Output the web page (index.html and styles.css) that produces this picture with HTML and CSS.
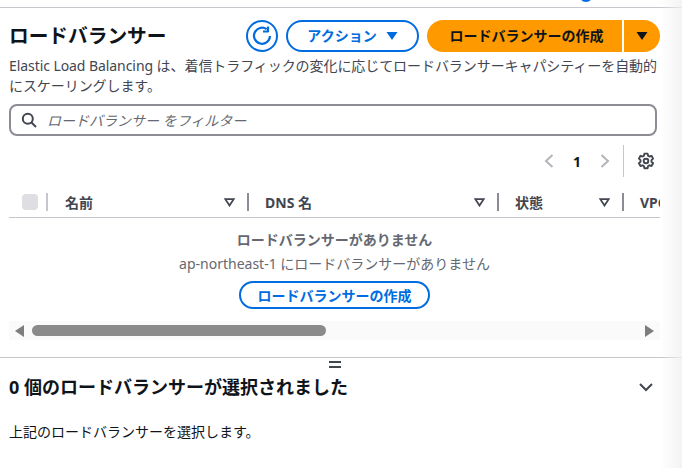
FILE: index.html
```html
<!DOCTYPE html>
<html lang="ja">
<head>
<meta charset="utf-8">
<title>ロードバランサー</title>
<link rel="stylesheet" href="styles.css">
</head>
<body>
<div class="topstrip"><span class="topdot"></span></div>
<main class="panel">
  <header class="head">
    <h1 class="title">ロードバランサー</h1>
    <div class="actions">
      <button class="iconbtn" aria-label="更新">
        <svg width="22" height="22" viewBox="0 0 22 22" fill="none" stroke="#006ce0" stroke-width="2.2"><path d="M15.6 4.2A8 8 0 1 0 19 11"/><path d="M17 1.5v5h-5" stroke-linejoin="round"/></svg>
      </button>
      <button class="btn normal"><span class="label">アクション</span><svg class="caret" width="12" height="10" viewBox="0 0 12 10"><path d="M0.5 1h11L6 9z" fill="#006ce0"/></svg></button>
      <div class="split">
        <button class="btn primary"><span class="label">ロードバランサーの作成</span></button>
        <button class="btn primary more" aria-label="その他"><svg width="12" height="10" viewBox="0 0 12 10"><path d="M0.5 1h11L6 9z" fill="#0f141a"/></svg></button>
      </div>
    </div>
  </header>
  <p class="desc">Elastic Load Balancing は、着信トラフィックの変化に応じてロードバランサーキャパシティーを自動的にスケーリングします。</p>
  <div class="filter">
    <svg width="16" height="16" viewBox="0 0 16 16" fill="none" stroke="#424650" stroke-width="2"><circle cx="6.8" cy="6.8" r="5"/><path d="M10.5 10.5L15 15"/></svg>
    <span class="ph">ロードバランサー をフィルター</span>
  </div>
  <div class="pager">
    <svg class="chev" width="12" height="16" viewBox="0 0 12 16" fill="none" stroke="#b4b4bb" stroke-width="2"><path d="M9.5 2L3 8l6.5 6"/></svg>
    <span class="pagenum">1</span>
    <svg class="chev" width="12" height="16" viewBox="0 0 12 16" fill="none" stroke="#b4b4bb" stroke-width="2"><path d="M2.5 2L9 8l-6.5 6"/></svg>
    <span class="vsep"></span>
    <svg class="gear" width="18" height="18" viewBox="0 0 18 18" fill="none" stroke="#424650" stroke-width="1.9" stroke-linejoin="round"><path d="M7.4 1.6h3.2l.5 2.2 1.3.7 2.1-.7 1.6 2.8-1.6 1.5v1.6l1.6 1.5-1.6 2.8-2.1-.7-1.3.7-.5 2.2H7.4l-.5-2.2-1.3-.7-2.1.7-1.6-2.8 1.6-1.5V8.1L1.900 6.600l1.600-2.800 2.100.7 1.300-.7z"/><circle cx="9" cy="9" r="2.300"/></svg>
  </div>
  <div class="tablewrap">
    <div class="thead">
      <div class="cell check"><span class="box"></span></div>
      <div class="cell name"><span>名前</span><svg class="sort" width="11" height="9" viewBox="0 0 11 9" fill="none" stroke="#424650" stroke-width="1.8"><path d="M1.300 1.200h8.400L5.500 7.500z"/></svg></div>
      <div class="cell dns"><span>DNS 名</span><svg class="sort" width="11" height="9" viewBox="0 0 11 9" fill="none" stroke="#424650" stroke-width="1.8"><path d="M1.300 1.200h8.400L5.500 7.500z"/></svg></div>
      <div class="cell state"><span>状態</span><svg class="sort" width="11" height="9" viewBox="0 0 11 9" fill="none" stroke="#424650" stroke-width="1.8"><path d="M1.300 1.200h8.400L5.500 7.500z"/></svg></div>
      <div class="cell vpc"><span>VPC ID</span></div>
    </div>
    <div class="empty">
      <strong class="empty-title">ロードバランサーがありません</strong>
      <span class="empty-sub">ap-northeast-1 にロードバランサーがありません</span>
      <button class="btn normal small">ロードバランサーの作成</button>
    </div>
    <div class="hscroll">
      <svg width="9" height="12" viewBox="0 0 9 12"><path d="M9 0v12L0 6z" fill="#7d7d7d"/></svg>
      <div class="track"><div class="thumb"></div></div>
      <svg width="9" height="12" viewBox="0 0 9 12"><path d="M0 0v12L9 6z" fill="#7d7d7d"/></svg>
    </div>
  </div>
</main>
<section class="detail">
  <div class="grip"></div>
  <div class="detail-head">
    <h2 class="detail-title">0 個のロードバランサーが選択されました</h2>
    <svg width="16" height="16" viewBox="0 0 16 16" fill="none" stroke="#424650" stroke-width="2"><path d="M2 5l6 6 6-6"/></svg>
  </div>
  <p class="detail-text">上記のロードバランサーを選択します。</p>
</section>
<div class="edgeshade"></div>
</body>
</html>
```

FILE: styles.css
```css
* { box-sizing: border-box; }
html, body { margin: 0; height: 468px; overflow: hidden; background: #fff; }
body {
  position: relative;
  font-family: "Noto Sans", "Noto Sans CJK JP", sans-serif;
  font-size: 14px;
  color: #0f141a;
}
button { font-family: inherit; cursor: pointer; }
.topstrip { height: 8px; border-bottom: 1px solid #c6c6cd; position: relative; }
.topdot { position: absolute; left: 579px; top: -12px; width: 14px; height: 14px; border-radius: 50%; background: #006ce0; }
.panel { padding: 12px 22px 0 9px; height: 350px; border-bottom: 1px solid #c6c6cd; width: 682px; }
.head { display: flex; justify-content: space-between; align-items: center; height: 32px; }
.title { margin: 0; font-size: 19.700px; font-weight: 700; line-height: 32px; }
.actions { display: flex; gap: 8px; }
.iconbtn { width: 32px; height: 32px; border-radius: 50%; border: 2px solid #006ce0; background: #fff; padding: 0; display: flex; align-items: center; justify-content: center; }
.btn { height: 32px; border-radius: 16px; font-size: 14px; font-weight: 700; display: flex; align-items: center; justify-content: center; padding: 0; }
.label { margin-bottom: 2px; }
.normal { background: #fff; border: 2px solid #006ce0; color: #006ce0; }
.actions > .normal { width: 133px; gap: 9px; }
.split { display: flex; gap: 2px; }
.primary { border: 0; background: #ff9900; color: #0f141a; width: 195px; border-radius: 16px 0 0 16px; padding-left: 4px; }
.more { width: 36px; border-radius: 0 16px 16px 0; padding-left: 0; }
.desc { margin: 4px 0 0; font-size: 14px; letter-spacing: -.07px; line-height: 20px; color: #424650; height: 40px; }
.filter { margin: 8px 3px 0 0; height: 32px; border: 2px solid #8c8c94; border-radius: 8px; display: flex; align-items: center; gap: 10px; padding-left: 10px; }
.ph { font-style: italic; font-size: 14px; color: #656871; }
.pager { display: flex; align-items: center; justify-content: flex-end; height: 32px; margin-top: 9px; padding-right: 5px; }
.pagenum { font-weight: 700; font-size: 14px; width: 44px; text-align: center; color: #0f141a; }
.vsep { width: 1px; height: 32px; background: #c6c6cd; margin: 0 13px 0 12px; }
.tablewrap { margin-top: 13px; width: 651px; }
.thead { display: flex; height: 28px; border-bottom: 1px solid #c6c6cd; overflow: hidden; padding-left: 13px; font-weight: 700; color: #424650; font-size: 14px; }
.cell { display: flex; align-items: center; justify-content: space-between; height: 18px; margin-top: 3px; flex: none; padding-right: 12px; border-right: 2px solid #8c8c94; padding-left: 16px; }
.check { width: 26px; padding: 0; border-right-color: #c6c6cd; justify-content: flex-start; }
.box { width: 16px; height: 16px; background: #dedee3; border-radius: 4px; }
.name { width: 201px; padding-left: 17px; }
.dns { width: 250px; }
.state { width: 125px; }
.vpc { width: 60px; border: 0; padding-right: 0; white-space: nowrap; justify-content: flex-start; }
.sort { flex: none; }
.empty { display: flex; flex-direction: column; align-items: center; height: 103px; padding-top: 12px; color: #656871; }
.empty-title { font-size: 14px; line-height: 20px; }
.empty-sub { font-size: 14px; line-height: 20px; margin-top: 4px; }
.small { height: 28px; width: 191px; margin-top: 7px; border-radius: 14px; }
.hscroll { display: flex; align-items: center; height: 19px; background: #fafafa; padding: 0 6px; gap: 8px; }
.track { flex: 1; height: 11px; }
.thumb { width: 294px; height: 11px; background: #8a8a8a; border-radius: 6px; }
.detail { padding: 0 22px 0 9px; position: relative; }
.grip { position: absolute; left: 329px; top: 3px; width: 12px; height: 7px; border-top: 2px solid #424650; border-bottom: 2px solid #424650; }
.detail-head { display: flex; justify-content: space-between; align-items: center; padding-top: 15px; padding-right: 6px; }
.detail-title { margin: 0; font-size: 18px; font-weight: 700; line-height: 28px; }
.detail-text { margin: 21px 0 0; font-size: 14px; line-height: 20px; color: #0f141a; }
.edgeshade { position: absolute; top: 0; right: 0; bottom: 0; width: 22px; background: linear-gradient(to right, rgba(240,240,240,0), rgba(240,240,240,.8)); pointer-events: none; }
```
